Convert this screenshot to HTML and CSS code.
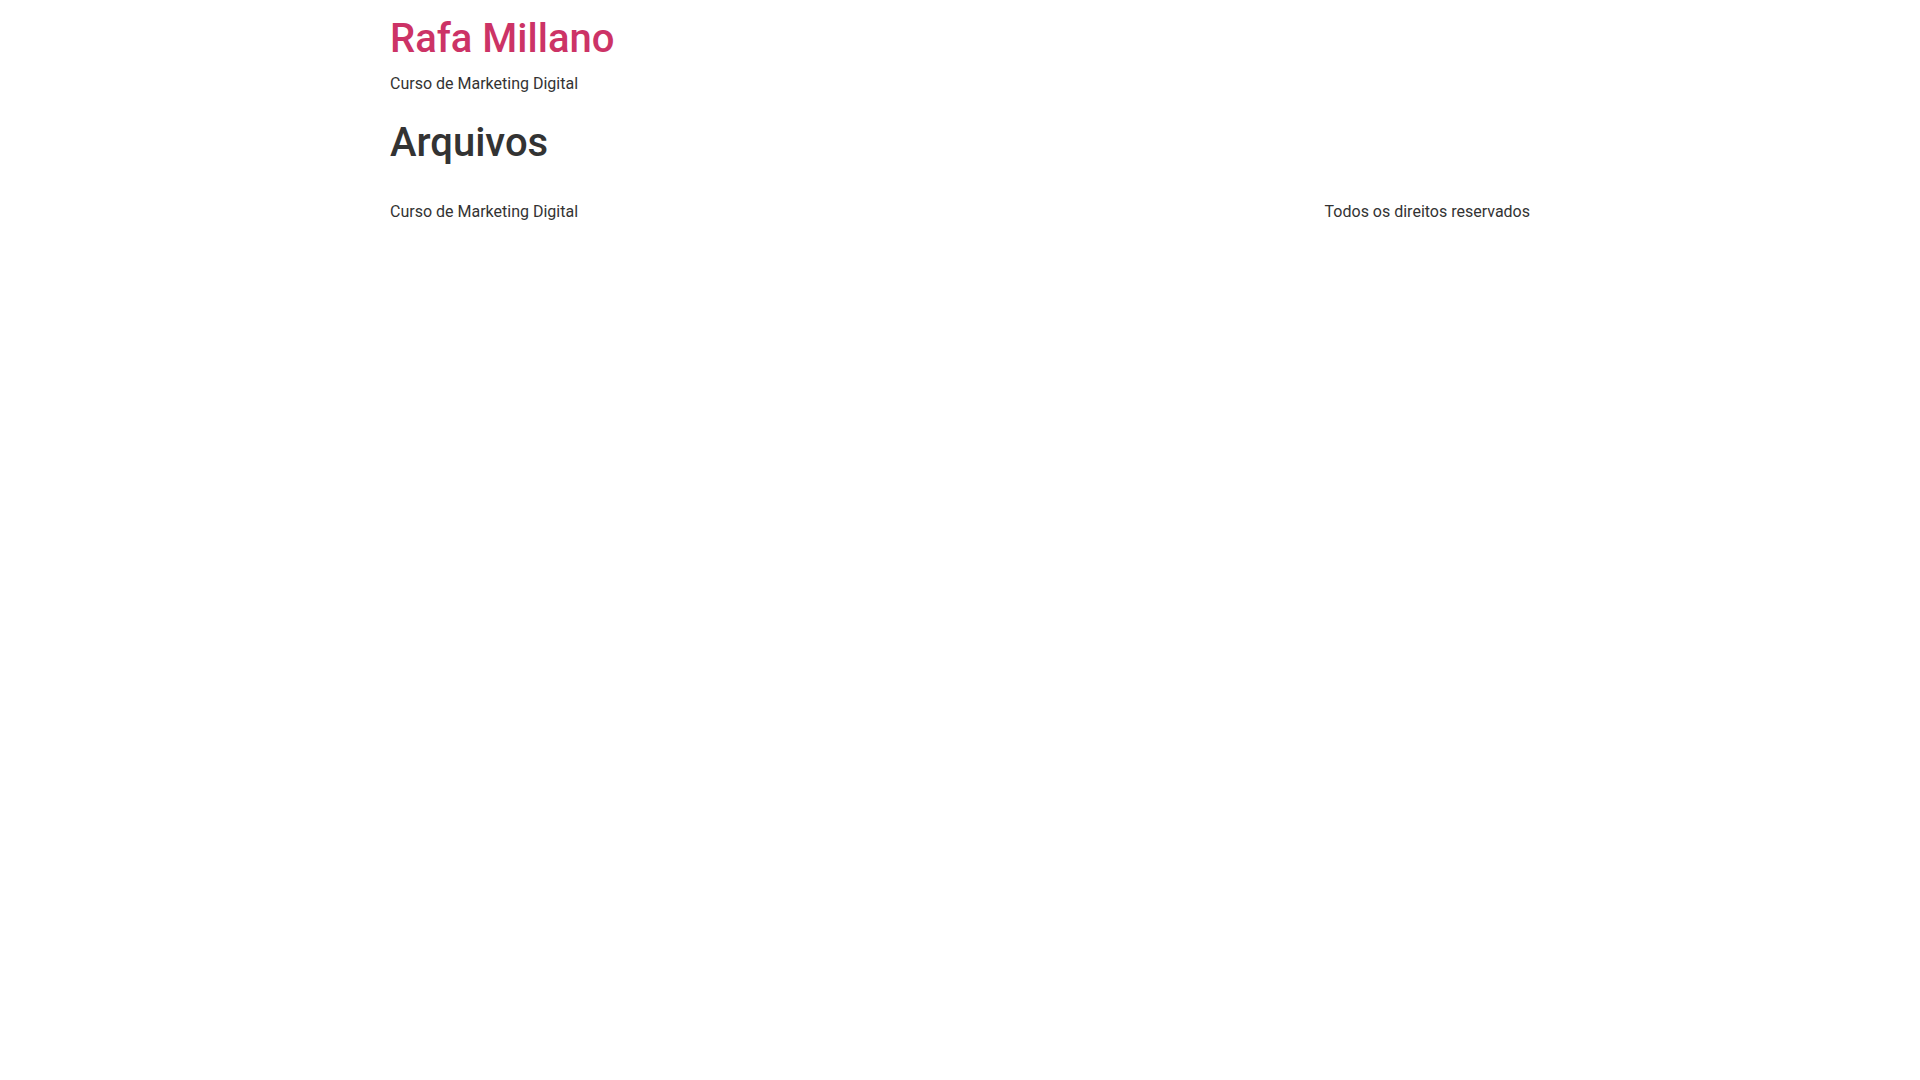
FILE: index.html
```html
<!DOCTYPE html>
<html lang="pt-BR">
<head>
<meta charset="utf-8">
<title>Arquivos - Rafa Millano</title>
<link rel="stylesheet" href="styles.css">
</head>
<body>
<header class="site-header">
  <div class="site-branding">
    <h1 class="site-title"><a href="#">Rafa Millano</a></h1>
    <p class="site-description">Curso de Marketing Digital</p>
  </div>
</header>
<main class="site-main">
  <div class="page-header">
    <h1 class="entry-title">Arquivos</h1>
  </div>
</main>
<footer class="site-footer">
  <div class="site-branding">
    <p class="site-description">Curso de Marketing Digital</p>
  </div>
  <div class="copyright">
    <p>Todos os direitos reservados</p>
  </div>
</footer>
</body>
</html>
```
FILE: styles.css
```css
html { line-height: 1.15; }
body {
  margin: 0;
  font-family: Roboto, "Liberation Sans", sans-serif;
  font-size: 16px;
  font-weight: 400;
  line-height: 1.5;
  color: #333;
  background: #fff;
}
h1 {
  margin: 0 0 8px;
  font-size: 40px;
  font-weight: 500;
  line-height: 1.2;
  color: inherit;
}
p { margin: 0 0 14.4px; }
a { color: #c36; text-decoration: none; }
.site-header, .site-main, .site-footer {
  max-width: 1140px;
  margin: 0 auto;
}
.site-header {
  display: flex;
  justify-content: space-between;
  padding: 15px 0 23px;
}
.site-title { margin: 0 0 9px; }
.site-description { margin: 0; }
.page-header .entry-title { margin: 0 0 8px; }
.site-footer {
  display: flex;
  justify-content: space-between;
  padding: 25px 0 16px;
}
.site-footer p { margin: 0; }
```
